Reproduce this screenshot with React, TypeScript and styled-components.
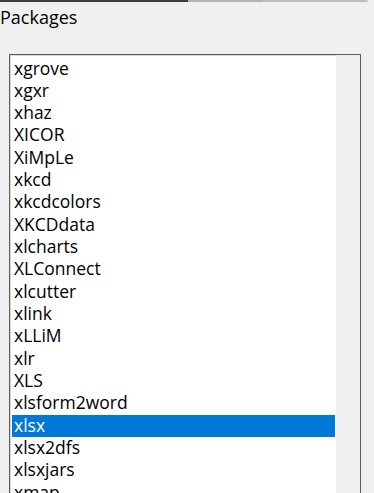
import React from "react";
import styled, { createGlobalStyle } from "styled-components";

const packages = [
    "xgrove", "xgxr", "xhaz", "XICOR", "XiMpLe", "xkcd", "xkcdcolors",
    "XKCDdata", "xlcharts", "XLConnect", "xlcutter", "xlink", "xLLiM",
    "xlr", "XLS", "xlsform2word", "xlsx", "xlsx2dfs", "xlsxjars", "xmap",
];

const selected = "xlsx";

const App = function PackagesDialog ()
{
    return (
        <>
            <Global/>
            <Window>
                <EdgeStrip>
                    <EdgeSegment $width={188} $tone="#3d3d3d"/>
                    <EdgeSegment $width={74} $tone="#b3b3b3"/>
                    <EdgeSegment $width={106} $tone="#bdbdbd" $rounded/>
                </EdgeStrip>
                <Title>Packages</Title>
                <ListBox>
                    <List>
                        {packages.map(name => (
                            <Row key={name} $active={name === selected}>{name}</Row>
                        ))}
                    </List>
                    <ScrollTrack/>
                </ListBox>
            </Window>
        </>
    );
};

/*
|--------------------------------------------------------------------------
| Styled
|--------------------------------------------------------------------------
*/

const Global = createGlobalStyle`
    html, body {
        margin: 0;
        height: 100%;
        overflow: hidden;
        background: #f0f0f0;
    }
    #root { height: 100%; }
`;

const Window = styled.div`
    height: 100%;
    display: flex;
    flex-direction: column;
    background: #f0f0f0;
    font-family: "Open Sans", "Noto Sans", sans-serif;
    color: #000;
`;

const EdgeStrip = styled.div`
    display: flex;
    height: 2px;
    flex-shrink: 0;
`;

const EdgeSegment = styled.div<{ $width: number; $tone: string; $rounded?: boolean }>`
    width: ${p => p.$width}px;
    background: ${p => p.$tone};
    border-top-right-radius: ${p => (p.$rounded ? "8px" : "0")};
`;

const Title = styled.div`
    margin: 3px 0 0 0;
    font-size: 18px;
    line-height: 24px;
    height: 49px;
    flex-shrink: 0;
`;

const ListBox = styled.div`
    display: flex;
    margin-left: 9px;
    width: 350px;
    height: 460px;
    flex-shrink: 0;
    border: 1px solid #5c5c5c;
    box-shadow: inset 0 0 0 1px #d9d9d9;
    background: #fff;
`;

const List = styled.div`
    flex: 1;
    display: flex;
    flex-direction: column;
    padding: 2.5px 1px 0 2px;
    overflow: hidden;
`;

const Row = styled.div<{ $active: boolean }>`
    box-sizing: border-box;
    height: 22.33px;
    line-height: 21px;
    flex-shrink: 0;
    padding-left: 2px;
    font-size: 17.5px;
    white-space: nowrap;
    background: ${p => (p.$active ? "#0078d7" : "transparent")};
    color: ${p => (p.$active ? "#fff" : "#000")};
`;

const ScrollTrack = styled.div`
    width: 23px;
    background: #f0f0f0;
    border-left: 1px solid #f0f0f0;
`;

export default App;
